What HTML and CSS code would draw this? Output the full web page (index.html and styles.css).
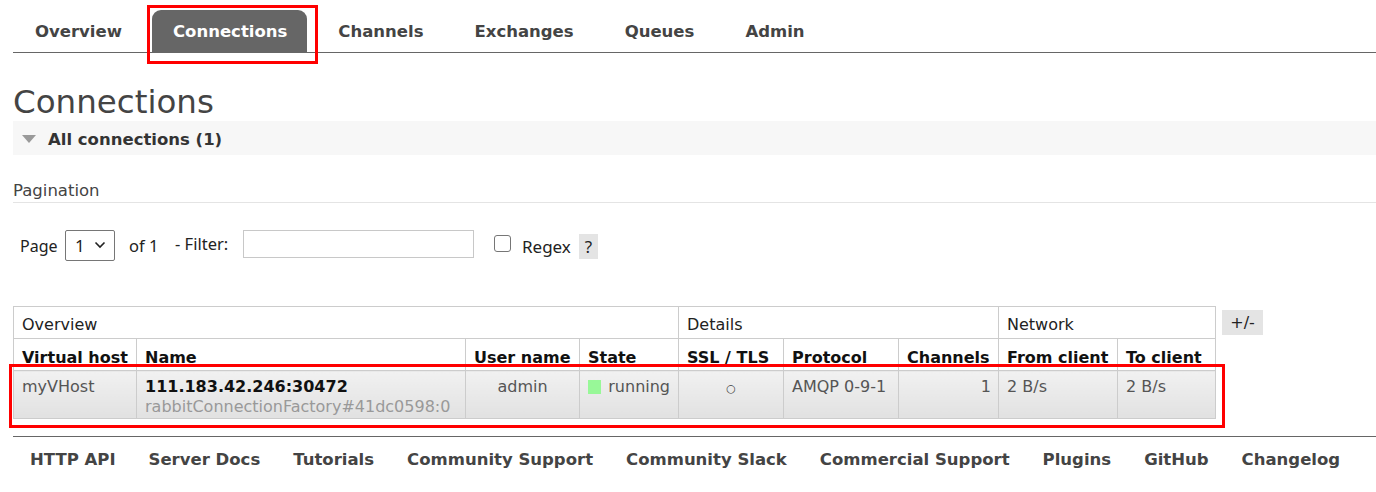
FILE: index.html
```html
<!DOCTYPE html>
<html>
<head>
<meta charset="utf-8">
<title>RabbitMQ Management - Connections</title>
<link rel="stylesheet" href="styles.css">
</head>
<body>
<div class="page">
  <nav class="menu">
    <ul class="tabs">
      <li><a class="tab">Overview</a></li>
      <li class="tab-wrap"><a class="tab selected">Connections</a><span class="mark mark-tab"></span></li>
      <li><a class="tab">Channels</a></li>
      <li><a class="tab">Exchanges</a></li>
      <li><a class="tab">Queues</a></li>
      <li><a class="tab">Admin</a></li>
    </ul>
  </nav>

  <main class="main">
    <h1 class="title">Connections</h1>
    <h2 class="section"><span class="tri"></span>All connections (1)</h2>

    <h3 class="sub">Pagination</h3>
    <div class="pager">
      <span class="lbl page-lbl">Page</span>
      <div class="select"><span>1</span><svg class="chev" width="12" height="8" viewBox="0 0 12 8"><path d="M1.5 1.5 L6 6 L10.5 1.5" fill="none" stroke="#222" stroke-width="1.6"/></svg></div>
      <span class="lbl of">of 1</span>
      <span class="lbl filter">- Filter:</span>
      <div class="input"></div>
      <span class="check"></span>
      <span class="lbl regex">Regex</span>
      <span class="help">?</span>
    </div>

    <div class="table-wrap">
      <table class="list">
        <colgroup>
          <col style="width:123px"><col style="width:329px"><col style="width:114px"><col style="width:99px"><col style="width:105px"><col style="width:115px"><col style="width:100px"><col style="width:119px"><col style="width:98px">
        </colgroup>
        <thead>
          <tr class="groups">
            <th colspan="4">Overview</th>
            <th colspan="3">Details</th>
            <th colspan="2">Network</th>
          </tr>
          <tr class="cols">
            <th>Virtual host</th>
            <th>Name</th>
            <th>User name</th>
            <th>State</th>
            <th>SSL / TLS</th>
            <th>Protocol</th>
            <th>Channels</th>
            <th>From client</th>
            <th>To client</th>
          </tr>
        </thead>
        <tbody>
          <tr class="row">
            <td>myVHost</td>
            <td><span class="cname">111.183.42.246:30472</span><span class="csub">rabbitConnectionFactory#41dc0598:0</span></td>
            <td class="c">admin</td>
            <td><span class="state"><span class="green"></span>running</span></td>
            <td class="c"><span class="ssl">○</span></td>
            <td>AMQP 0-9-1</td>
            <td class="r">1</td>
            <td>2 B/s</td>
            <td>2 B/s</td>
          </tr>
        </tbody>
      </table>
      <span class="toggle">+/-</span>
      <span class="mark mark-row"></span>
    </div>
  </main>

  <footer class="footer">
    <ul class="links">
      <li>HTTP API</li>
      <li>Server Docs</li>
      <li>Tutorials</li>
      <li>Community Support</li>
      <li>Community Slack</li>
      <li>Commercial Support</li>
      <li>Plugins</li>
      <li>GitHub</li>
      <li>Changelog</li>
    </ul>
  </footer>
</div>
</body>
</html>
```
FILE: styles.css
```css
html, body {
  margin: 0;
  padding: 0;
  background: #fff;
}
body {
  font-family: "DejaVu Sans", Verdana, sans-serif;
  font-size: 16px;
  color: #484848;
}
.page {
  padding-left: 13px;
}

/* menu */
.tabs {
  list-style: none;
  margin: 0;
  padding: 10px 0 0 1px;
  display: flex;
  border-bottom: 1px solid #666;
}
.tabs li {
  margin-right: 10px;
}
.tab-wrap {
  position: relative;
}
.tab {
  display: block;
  height: 42px;
  line-height: 44px;
  padding: 0 20px 0 21px;
  font-weight: bold;
  font-size: 16.5px;
  color: #444;
  border-radius: 9px 9px 0 0;
  overflow: hidden;
}
.tab.selected {
  background: #666;
  color: #fff;
}
.mark {
  position: absolute;
  border: 3px solid #f00;
  pointer-events: none;
}
.mark-tab {
  left: -5px;
  top: -5px;
  width: 165px;
  height: 53px;
}

/* main */
.title {
  margin: 30px 0 0;
  font-size: 32.5px;
  line-height: 38px;
  font-weight: normal;
  color: #444;
}
.section {
  margin: 0;
  height: 34px;
  background: #f7f7f7;
  font-size: 16.5px;
  font-weight: bold;
  color: #333;
  display: flex;
  align-items: center;
  padding-left: 9px;
  padding-top: 2px;
  box-sizing: border-box;
}
.tri {
  width: 0;
  height: 0;
  border-left: 7px solid transparent;
  border-right: 7px solid transparent;
  border-top: 8px solid #9a9a9a;
  margin-right: 12px;
  margin-top: -1px;
}
.sub {
  margin: 25px 0 0;
  font-size: 16.5px;
  line-height: 22px;
  font-weight: normal;
  color: #444;
  border-bottom: 1px solid #e4e4e4;
}

.pager {
  display: flex;
  align-items: center;
  height: 32px;
  margin-top: 26px;
  padding-left: 7px;
  font-family: "Noto Sans", "Open Sans", sans-serif;
  font-size: 16px;
  color: #222;
}
.lbl {
  line-height: 20px;
  white-space: nowrap;
}
.page-lbl {
  width: 45px;
  margin-top: 2px;
}
.select {
  width: 48px;
  height: 29px;
  border: 1px solid #767676;
  border-radius: 2px;
  display: flex;
  align-items: center;
  font-size: 17px;
}
.select span {
  margin-left: 9px;
  width: 17px;
}
.chev {
  margin-left: 2px;
}
.of {
  margin-left: 14px;
  width: 46px;
  margin-top: 2px;
  font-size: 16.5px;
}
.filter {
  width: 68px;
  margin-top: -3px;
  font-size: 16.5px;
}
.input {
  width: 229px;
  height: 26px;
  border: 1px solid #c8c8c8;
  margin-top: -3px;
}
.check {
  margin-left: 20px;
  width: 15px;
  height: 15px;
  border: 1px solid #767676;
  border-radius: 3px;
  margin-top: -4px;
}
.regex {
  margin-left: 11px;
  width: 57px;
  margin-top: 3px;
  font-size: 17px;
}
.help {
  width: 19px;
  height: 25px;
  line-height: 25px;
  text-align: center;
  background: #e4e4e4;
  margin-top: 2px;
  font-size: 17px;
}

/* table */
.table-wrap {
  position: relative;
  display: flex;
  align-items: flex-start;
  margin-top: 45px;
}
.list {
  border-collapse: collapse;
  table-layout: fixed;
  width: 1202px;
  color: #555;
}
.list th, .list td {
  padding: 0 8px;
  text-align: left;
  white-space: nowrap;
  overflow: visible;
  box-sizing: border-box;
}
.groups th {
  height: 32px;
  font-weight: normal;
  color: #222;
  border: 1px solid #ccc;
  vertical-align: middle;
  padding-top: 4px;
}
.cols th {
  height: 32px;
  font-weight: bold;
  color: #111;
  border-left: 1px solid #ccc;
  border-right: 1px solid #ccc;
  vertical-align: bottom;
  padding-bottom: 1px;
  line-height: 22px;
}
.row td {
  height: 48px;
  vertical-align: top;
  padding-top: 6px;
  padding-bottom: 0;
  border: 1px solid #ccc;
  background: linear-gradient(#f1f1f1, #e1e1e1);
  line-height: 20px;
}
.cname {
  display: block;
  font-weight: bold;
  color: #111;
}
.csub {
  display: block;
  color: #999;
}
.c { text-align: center !important; }
.r { text-align: right !important; padding-right: 7px !important; }
.ssl {
  font-size: 11px;
  color: #444;
}
.state {
  display: flex;
  align-items: center;
}
.green {
  width: 14px;
  height: 14px;
  background: #98f898;
  margin-right: 7px;
}
.toggle {
  margin-left: 6px;
  margin-top: 4px;
  width: 41px;
  height: 25px;
  line-height: 25px;
  text-align: center;
  background: #e4e4e4;
  color: #222;
}
.mark-row {
  left: -4px;
  top: 58px;
  width: 1210px;
  height: 58px;
}

/* footer */
.footer {
  margin-top: 17px;
  border-top: 1px solid #666;
}
.links {
  list-style: none;
  margin: 0;
  padding: 12px 0 0 17px;
  display: flex;
  font-family: "DejaVu Sans", sans-serif;
  font-weight: bold;
  font-size: 16.5px;
  color: #444;
}
.links li {
  margin-right: 33px;
  line-height: 22px;
  white-space: nowrap;
}
```
